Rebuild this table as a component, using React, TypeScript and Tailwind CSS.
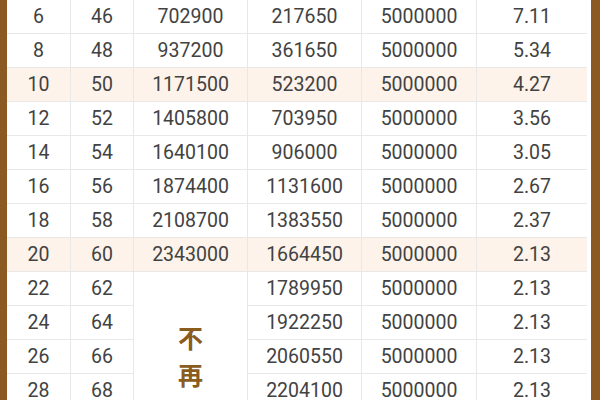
import React from "react";

type Row = { a: string; b: string; c?: string; d: string; e: string; f: string; hl?: boolean };

const rows: Row[] = [
  { a: "6", b: "46", c: "702900", d: "217650", e: "5000000", f: "7.11" },
  { a: "8", b: "48", c: "937200", d: "361650", e: "5000000", f: "5.34" },
  { a: "10", b: "50", c: "1171500", d: "523200", e: "5000000", f: "4.27", hl: true },
  { a: "12", b: "52", c: "1405800", d: "703950", e: "5000000", f: "3.56" },
  { a: "14", b: "54", c: "1640100", d: "906000", e: "5000000", f: "3.05" },
  { a: "16", b: "56", c: "1874400", d: "1131600", e: "5000000", f: "2.67" },
  { a: "18", b: "58", c: "2108700", d: "1383550", e: "5000000", f: "2.37" },
  { a: "20", b: "60", c: "2343000", d: "1664450", e: "5000000", f: "2.13", hl: true },
  { a: "22", b: "62", d: "1789950", e: "5000000", f: "2.13" },
  { a: "24", b: "64", d: "1922250", e: "5000000", f: "2.13" },
  { a: "26", b: "66", d: "2060550", e: "5000000", f: "2.13" },
  { a: "28", b: "68", d: "2204100", e: "5000000", f: "2.13" },
];

const cell = "flex items-center justify-center border-b border-r border-[#e8e8e8] pt-[1px]";

export default function App() {
  return (
    <div className="w-[600px] h-[400px] overflow-hidden flex bg-white text-[#424242] font-['Roboto','Noto_Sans','Noto_Sans_CJK_SC',sans-serif]">
      <div className="w-[7px] h-full bg-[#8a5a22] shrink-0" />
      <div className="w-[580px] h-full overflow-hidden shrink-0">
        <div className="grid grid-cols-[64px_63px_114px_114px_115px_110px] auto-rows-[34px] text-[19.5px] leading-none">
          <div className="col-start-3 row-start-9 row-span-4 border-r border-[#e8e8e8] bg-white flex flex-col items-center pt-[47px] font-['Noto_Sans_CJK_SC',sans-serif] text-[25px] leading-[37px] font-bold text-[#8a5c1e]">
            <span>不</span>
            <span>再</span>
          </div>
          {rows.map((r, i) => {
            const bg = r.hl ? "bg-[#fdf3ea]" : "bg-white";
            return (
              <React.Fragment key={i}>
                <div className={`${cell} ${bg}`}>{r.a}</div>
                <div className={`${cell} ${bg}`}>{r.b}</div>
                {r.c && <div className={`${cell} ${bg}`}>{r.c}</div>}
                <div className={`${cell} ${bg}`}>{r.d}</div>
                <div className={`${cell} ${bg}`}>{r.e}</div>
                <div className={`${cell} ${bg} border-r-0`}>{r.f}</div>
              </React.Fragment>
            );
          })}
        </div>
      </div>
      <div className="w-[4px] h-full bg-white shrink-0" />
      <div className="flex-1 h-full bg-[#8a5a22]" />
    </div>
  );
}
